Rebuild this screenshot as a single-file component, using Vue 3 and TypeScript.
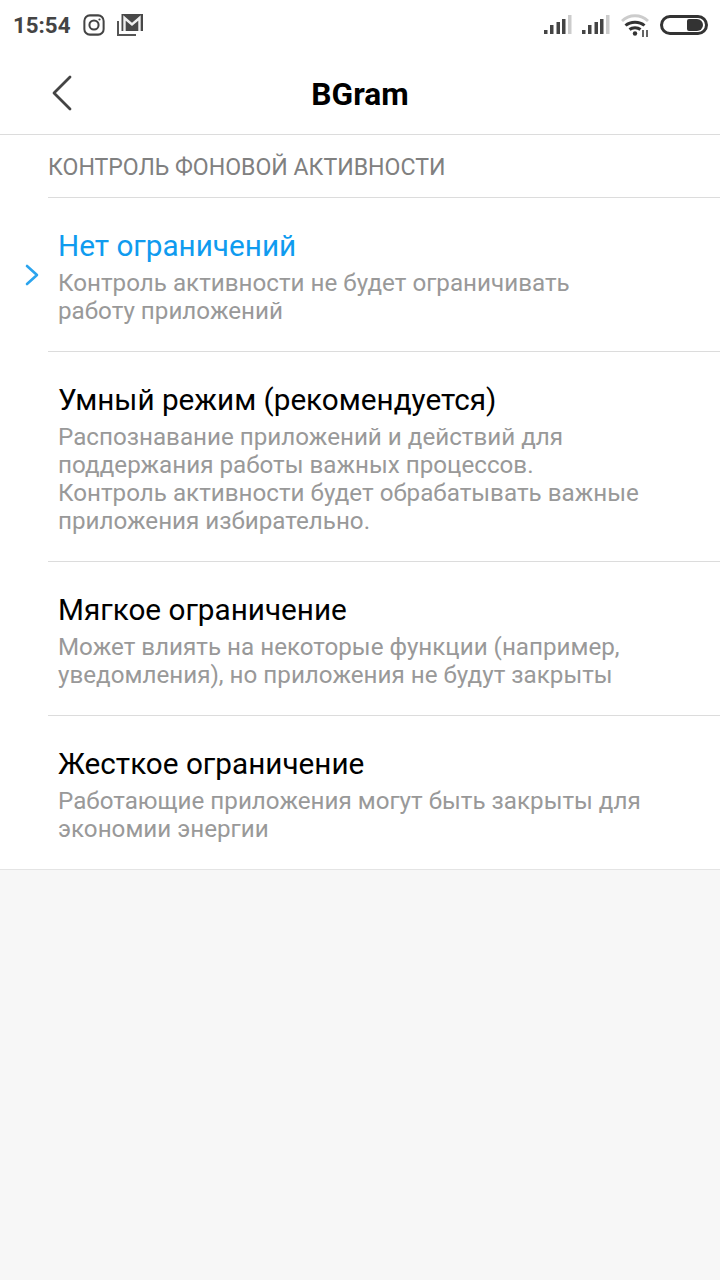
<script setup lang="ts">
interface Mode {
  title: string;
  lines: string[];
  active?: boolean;
}

const modes: Mode[] = [
  {
    title: 'Нет ограничений',
    lines: ['Контроль активности не будет ограничивать', 'работу приложений'],
    active: true,
  },
  {
    title: 'Умный режим (рекомендуется)',
    lines: [
      'Распознавание приложений и действий для',
      'поддержания работы важных процессов.',
      'Контроль активности будет обрабатывать важные',
      'приложения избирательно.',
    ],
  },
  {
    title: 'Мягкое ограничение',
    lines: ['Может влиять на некоторые функции (например,', 'уведомления), но приложения не будут закрыты'],
  },
  {
    title: 'Жесткое ограничение',
    lines: ['Работающие приложения могут быть закрыты для', 'экономии энергии'],
  },
];
</script>

<template>
  <div class="page">
    <div class="top">
      <div class="status">
        <span class="time">15:54</span>
        <svg class="ic-insta" width="22" height="22" viewBox="0 0 24 24" fill="none" stroke="#444" stroke-width="2.200">
          <rect x="1.500" y="1.500" width="21" height="21" rx="6" />
          <circle cx="12" cy="12" r="5" />
          <circle cx="18" cy="6" r="1.200" fill="#444" stroke="none" />
        </svg>
        <svg class="ic-mail" width="26" height="22" viewBox="0 0 26 22">
          <path d="M1 7v14h18" fill="none" stroke="#555" stroke-width="2" />
          <rect x="4.500" y="0" width="21.500" height="17" fill="#484848" />
          <path d="M7.500 17V4l7.500 6.500L22.500 4v13" fill="none" stroke="#eee" stroke-width="2.400" />
        </svg>
        <span class="spacer"></span>
        <svg width="28" height="20" viewBox="0 0 28 20">
          <rect x="0" y="15" width="3.500" height="4" fill="#444" />
          <rect x="6" y="10" width="3.500" height="9" fill="#444" />
          <rect x="12.500" y="7" width="3.500" height="12" fill="#444" />
          <rect x="18" y="4" width="3.500" height="15" fill="#444" />
          <rect x="24" y="0" width="3.500" height="19" fill="#ccc" />
        </svg>
        <svg class="sig2" width="28" height="20" viewBox="0 0 28 20">
          <rect x="0" y="15" width="3.500" height="4" fill="#444" />
          <rect x="6" y="10" width="3.500" height="9" fill="#444" />
          <rect x="12.500" y="7" width="3.500" height="12" fill="#444" />
          <rect x="18" y="4" width="3.500" height="15" fill="#444" />
          <rect x="24" y="0" width="3.500" height="19" fill="#ccc" />
        </svg>
        <svg class="wifi" width="30" height="24" viewBox="0 0 30 24" fill="none">
          <path d="M2 8C9 1 21 1 28 8" stroke="#ccc" stroke-width="2.800" />
          <path d="M5.500 12.500C10.500 8 19.500 8 24.500 12.500" stroke="#333" stroke-width="3" />
          <path d="M9.500 16.500C12.500 14 17.500 14 20.500 16.500" stroke="#333" stroke-width="3" />
          <circle cx="15" cy="20.500" r="2.200" fill="#333" />
          <path d="M23 17v7M27 17v7" stroke="#555" stroke-width="1.800" />
        </svg>
        <div class="battery"><div class="battery-fill"></div></div>
      </div>
      <header class="nav">
        <svg class="back" width="24" height="38" viewBox="0 0 24 38" fill="none">
          <path d="M20 3 4 19l16 16" stroke="#444" stroke-width="2.800" stroke-linecap="round" stroke-linejoin="round" />
        </svg>
        <h1>BGram</h1>
      </header>
    </div>

    <section class="panel">
      <div class="section-title">КОНТРОЛЬ ФОНОВОЙ АКТИВНОСТИ</div>
      <div v-for="m in modes" :key="m.title" class="row" :class="{ 'row--active': m.active }">
        <svg v-if="m.active" class="check" width="16" height="22" viewBox="0 0 16 22" fill="none">
          <path d="M3 2l10 9-10 9" stroke="#2ba4ee" stroke-width="2.600" stroke-linecap="round" stroke-linejoin="round" />
        </svg>
        <div class="row-title">{{ m.title }}</div>
        <div v-for="l in m.lines" :key="l" class="row-line">{{ l }}</div>
      </div>
    </section>
  </div>
</template>

<style>
html,
body {
  margin: 0;
  background: #f7f7f7;
}
</style>

<style scoped>
.page {
  width: 720px;
  height: 1280px;
  background: #f7f7f7;
  font-family: Roboto, "Noto Sans", sans-serif;
  overflow: hidden;
}

.top {
  background: #fff;
  border-bottom: 1px solid #dcdcdc;
}

.status {
  height: 50px;
  display: flex;
  align-items: center;
  padding: 0 12px 0 13px;
  box-sizing: border-box;
}

.time {
  font-size: 22.300px;
  font-weight: 700;
  color: #444;
  width: 70px;
}

.ic-insta {
  margin-right: 12px;
}

.spacer {
  flex: 1;
}

.sig2 {
  margin-left: 10px;
}

.wifi {
  margin-left: 10px;
  margin-right: 10px;
}

.battery {
  width: 42px;
  height: 14px;
  margin-bottom: 1px;
  border: 3px solid #333;
  border-radius: 11px;
  box-sizing: content-box;
  display: flex;
  justify-content: flex-end;
  align-items: center;
}

.battery-fill {
  width: 16px;
  height: 12px;
  margin-right: 2px;
  background: #333;
  border-radius: 2px 6px 6px 2px;
}

.nav {
  height: 84px;
  display: flex;
  align-items: center;
  justify-content: center;
  position: relative;
}

.back {
  position: absolute;
  left: 50px;
  top: 24px;
}

.nav h1 {
  margin: 4px 0 0;
  font-size: 31.700px;
  font-weight: 700;
  color: #000;
}

.panel {
  background: #fff;
  border-bottom: 1px solid #e4e4e4;
  padding-left: 48px;
}

.section-title {
  height: 62px;
  line-height: 66px;
  font-size: 23.100px;
  color: #808080;
}

.row {
  position: relative;
  border-top: 1px solid #dcdcdc;
  padding: 29px 0 26px 10px;
}

.row-title {
  font-size: 29.700px;
  line-height: 38px;
  color: #000;
  margin-bottom: 4px;
}

.row--active .row-title {
  color: #0f9bef;
}

.row-line {
  font-size: 24.200px;
  line-height: 28px;
  color: #999;
  white-space: nowrap;
}

.check {
  position: absolute;
  left: -24px;
  top: 66px;
}
</style>
